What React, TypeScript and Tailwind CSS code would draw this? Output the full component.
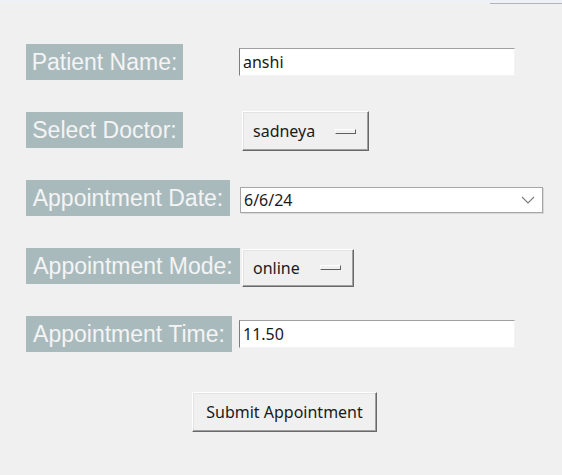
import React from 'react';

const labelCls =
    "h-[36px] bg-[#a9babd] text-[#f4f4f4] text-[23px] leading-[36px] text-center justify-self-start whitespace-nowrap font-['Liberation_Sans',Arial,sans-serif]";

const raised =
    "bg-[#f0f0f0] border border-t-white border-l-white border-r-[#696969] border-b-[#696969] shadow-[inset_-1px_-1px_0_#a0a0a0,inset_1px_1px_0_#e3e3e3]";

const uiFont = "font-['Noto_Sans',sans-serif] text-[16px] text-[#1a1a1a]";

function Entry({ value }: { value: string }) {
    return (
        <div
            className={`-ml-[1px] h-[28px] w-[276px] bg-white border border-t-[#a0a0a0] border-l-[#7d7d7d] border-r-[#f4f4f4] border-b-[#f4f4f4] pl-[3px] leading-[26px] ${uiFont}`}
        >
            {value}
        </div>
    );
}

function OptionMenu({ value, height }: { value: string; height: string }) {
    return (
        <div className={`ml-[2px] justify-self-start flex items-center gap-[20px] pl-[10px] pr-[12px] ${height} ${raised} ${uiFont}`}>
            <span>{value}</span>
            <span className="h-[5px] w-[21px] bg-[#f0f0f0] border border-t-white border-l-white border-r-[#5f5f5f] border-b-[#5f5f5f]" />
        </div>
    );
}

export default function App() {
    return (
        <div className="min-h-screen bg-[#f0f0f0]">
            {/* window edge */}
            <div className="h-[4px] bg-gradient-to-b from-[#edf2f8] to-[#f0f0f0] flex justify-end">
                <div className="mt-[3px] h-px w-[72px] bg-[#b4b4bc]" />
            </div>

            <div className="grid grid-cols-[214px_303px] auto-rows-[36px] gap-y-[32px] items-center pl-[26px] pt-[40px]">
                <div className={`${labelCls} w-[157px]`}>Patient Name:</div>
                <Entry value="anshi" />

                <div className={`${labelCls} w-[157px]`}>Select Doctor:</div>
                <div className="mt-[2px]">
                    <OptionMenu value="sadneya" height="h-[40px]" />
                </div>

                <div className={`${labelCls} w-[204px]`}>Appointment Date:</div>
                <div className={`mt-[4px] h-[26px] w-[303px] bg-white border border-[#a6a6a6] shadow-[1px_1px_0_#d8d8d8] flex items-center justify-between pl-[3px] pr-[7px] ${uiFont}`}>
                    <span>6/6/24</span>
                    <svg width="14" height="8" viewBox="0 0 14 8">
                        <polyline points="1,1 7,7 13,1" fill="none" stroke="#7c7c7c" strokeWidth="1.1" />
                    </svg>
                </div>

                <div className={`${labelCls} w-[214px]`}>Appointment Mode:</div>
                <div className="mt-[3px]">
                    <OptionMenu value="online" height="h-[38px]" />
                </div>

                <div className={`${labelCls} w-[206px]`}>Appointment Time:</div>
                <Entry value="11.50" />
            </div>

            <div className="ml-[26px] w-[517px] mt-[40px] flex justify-center">
                <div className={`h-[40px] px-[13px] flex items-center ${raised} ${uiFont}`}>Submit Appointment</div>
            </div>
        </div>
    );
}
